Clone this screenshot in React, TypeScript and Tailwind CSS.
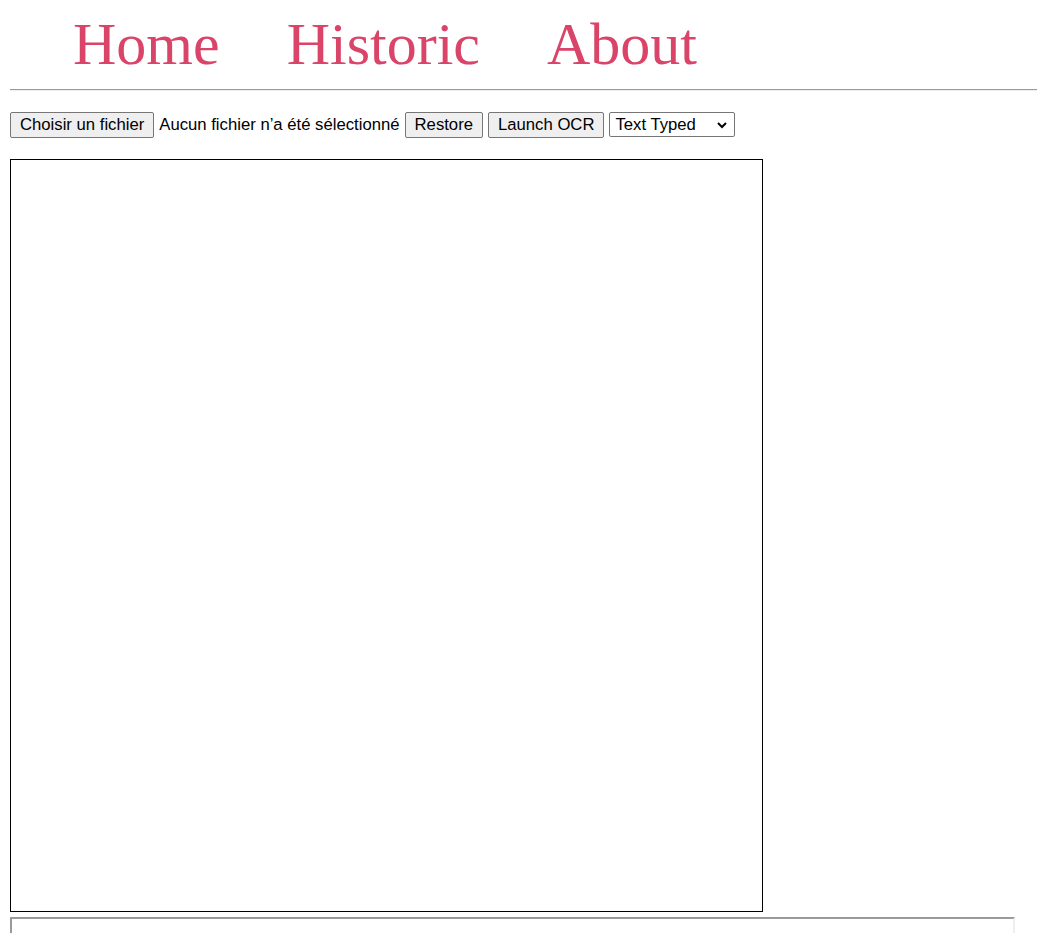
import React from 'react'

const links = ['Home', 'Historic', 'About']

function NavBar() {
  return (
    <nav className="mt-[10px] flex h-[69px] items-start pl-[63px] font-['Liberation_Serif',serif] text-[60px] leading-[69px] text-[#d94468]">
      {links.map((label, i) => (
        <a
          key={label}
          href="#"
          className={i === 0 ? '' : 'ml-[67px]'}
        >
          {label}
        </a>
      ))}
    </nav>
  )
}

function Toolbar() {
  const btn =
    'h-[26px] rounded-[2px] border border-[#767676] bg-[#efefef] px-[9px] text-[16.7px] leading-[24px] text-black'

  return (
    <div className="mt-[20px] flex h-[27px] items-center font-['Liberation_Sans',Arial,sans-serif] text-[16.7px] text-black">
      <button className={btn}>Choisir un fichier</button>
      <span className="ml-[5px]">Aucun fichier n’a été sélectionné</span>
      <button className={`${btn} ml-[5px]`}>Restore</button>
      <button className={`${btn} ml-[5px]`}>Launch OCR</button>
      <div className="ml-[5px] flex h-[25px] w-[126px] items-center justify-between rounded-[2px] border border-[#767676] bg-white pl-[5px] pr-[6px]">
        <span>Text Typed</span>
        <svg width="12" height="12" viewBox="0 0 12 12" fill="none">
          <path d="M2 4l4 4 4-4" stroke="black" strokeWidth="2" />
        </svg>
      </div>
    </div>
  )
}

export default function App() {
  return (
    <div className="min-h-screen bg-white pl-[10px]">
      <NavBar />
      <div className="mt-[10px] h-[2px] border-t border-b border-t-[#9a9a9a] border-b-[#eeeeee]" />
      <Toolbar />
      <div className="mt-[21px] h-[753px] w-[753px] border border-black" />
      <div className="mt-[5px] h-[40px] w-[1005px] border-2 border-t-[#9a9a9a] border-l-[#9a9a9a] border-r-[#eeeeee] border-b-[#eeeeee]" />
    </div>
  )
}
